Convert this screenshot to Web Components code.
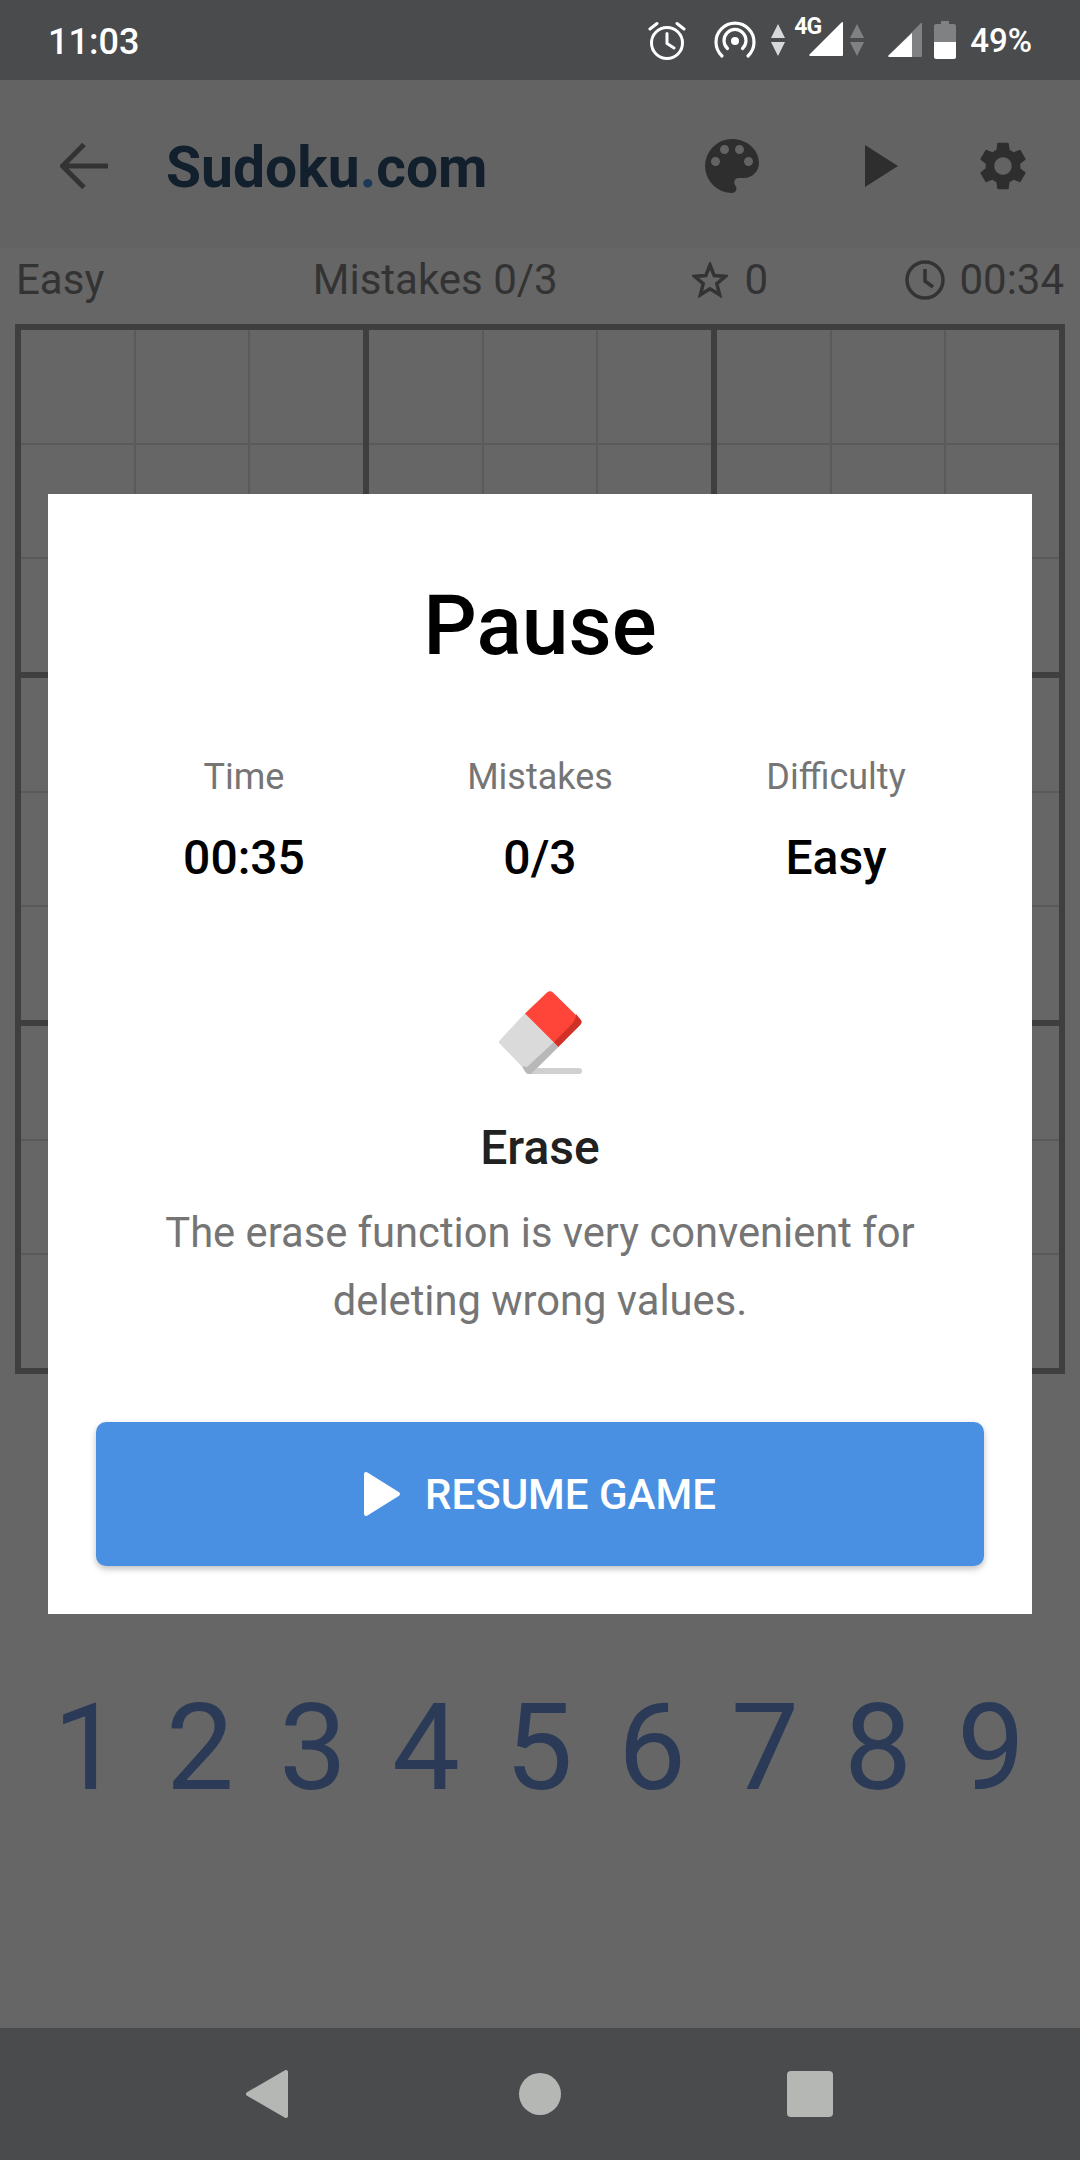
<!DOCTYPE html>
<html lang="en">
<head>
<meta charset="utf-8">
<title>Sudoku.com</title>
<style>
  html, body { margin: 0; padding: 0; }
  body { width: 1080px; height: 2160px; overflow: hidden; font-family: Roboto, "Liberation Sans", sans-serif; }
</style>
</head>
<body>
<sudoku-app>
  <status-bar slot="status"></status-bar>
  <game-header></game-header>
  <game-info></game-info>
  <sudoku-board></sudoku-board>
  <number-pad></number-pad>
  <pause-dialog slot="overlay">
    <pause-stat label="Time" value="00:35"></pause-stat>
    <pause-stat label="Mistakes" value="0/3"></pause-stat>
    <pause-stat label="Difficulty" value="Easy"></pause-stat>
  </pause-dialog>
  <nav-bar slot="nav"></nav-bar>
</sudoku-app>

<script>
  // small helper, every element just sets its shadow html in the constructor
  class Base extends HTMLElement {
    constructor(html) {
      super();
      this.attachShadow({ mode: 'open' });
      this.shadowRoot.innerHTML = html;
    }
  }

  class SudokuApp extends Base {
    constructor() {
      super(`
        <style>
          :host { display: flex; flex-direction: column; width: 1080px; height: 2160px; background: #fff; }
          #main { position: relative; flex: 1; display: flex; flex-direction: column; background: #fff; }
          #overlay { position: absolute; inset: 0; }
        </style>
        <slot name="status"></slot>
        <div id="main">
          <slot></slot>
          <div id="overlay"><slot name="overlay"></slot></div>
        </div>
        <slot name="nav"></slot>
      `);
    }
  }

  class StatusBar extends Base {
    constructor() {
      super(`
        <style>
          :host { display: flex; align-items: center; height: 80px; padding: 0 48px 0 48px; box-sizing: border-box; background: #4a4b4d; color: #fff; }
          #time { font-size: 36px; font-weight: 500; flex: 1; position: relative; top: 2px; }
          svg { display: block; flex: none; }
          #icons { display: flex; align-items: center; height: 80px; }
          #g4 { position: relative; width: 50px; height: 80px; margin-left: 12px; }
          #g4 span { position: absolute; left: -3px; top: 14px; font: 700 23px/26px Roboto, sans-serif; letter-spacing: -1px; }
          #g4 svg { position: absolute; left: 12px; top: 22px; }
          #pct { font-size: 33px; font-weight: 500; margin-left: 14px; }
        </style>
        <span id="time">11:03</span>
        <div id="icons">
          <svg width="38" height="40" viewBox="0 0 38 40"><g fill="none" stroke="#fff" stroke-width="3" stroke-linecap="round"><circle cx="19" cy="23" r="15.5"/><path d="M19 13.500V23.500L26 28M2 9L9 3.500M36 9L29 3.500"/></g></svg>
          <svg style="margin-left:28px" width="42" height="38" viewBox="0 0 42 38"><g fill="none" stroke="#fff" stroke-width="3.200" stroke-linecap="round"><path d="M8 35A19 19 0 1 1 34 35"/><path d="M13.500 27.500A11 11 0 1 1 28.500 27.500"/></g><circle cx="21" cy="20" r="4" fill="#fff"/></svg>
          <svg style="margin-left:15px" width="14" height="32" viewBox="0 0 14 32"><path d="M7 0L14 14H0Z M0 18H14L7 32Z" fill="#d8d8d8"/></svg>
          <div id="g4"><span>4G</span><svg width="34" height="34" viewBox="0 0 34 34"><path d="M33 0a1 1 0 0 1 1 1V33a1 1 0 0 1-1 1H1L0 33Z" fill="#fff"/></svg></div>
          <svg style="margin-left:3px" width="14" height="32" viewBox="0 0 14 32"><path d="M7 0L14 14H0Z M0 18H14L7 32Z" fill="#808183"/></svg>
          <svg style="margin-left:24px" width="34" height="34" viewBox="0 0 34 34"><path d="M34 0V33a1 1 0 0 1-1 1H1L0 33L33 0Z" fill="#808183"/><path d="M24 10V34H1L0 33Z" fill="#fff"/></svg>
          <svg style="margin-left:12px" width="22" height="38" viewBox="0 0 22 38"><path d="M7 0H15V3H20a2 2 0 0 1 2 2V21H0V5a2 2 0 0 1 2-2H7Z" fill="#808183"/><path d="M0 21H22V36a2 2 0 0 1-2 2H2a2 2 0 0 1-2-2Z" fill="#fff"/></svg>
          <span id="pct">49%</span>
        </div>
      `);
    }
  }

  class GameHeader extends Base {
    constructor() {
      super(`
        <style>
          :host { display: flex; align-items: center; height: 168px; padding-top: 3px; background: #f8f8f8; box-sizing: border-box; position: relative; }
          svg { display: block; flex: none; }
          h1 { margin: 3px 0 0 58px; font-size: 57px; font-weight: 700; color: #2f4e71; flex: 1; }
          h1 b { color: #4a90e2; font-weight: 700; }
        </style>
        <svg style="margin-left:60px" width="48" height="46" viewBox="0 0 48 46"><path d="M48 23H4M24 1.500L2.500 23L24 44.500" fill="none" stroke="#808080" stroke-width="5"/></svg>
        <h1>Sudoku<b>.</b>com</h1>
        <svg style="margin-right:97px" width="72" height="72" viewBox="0 0 24 24"><path fill="#737373" d="M12 3a9 9 0 0 0 0 18c.83 0 1.500-.67 1.500-1.500 0-.39-.15-.74-.39-1.010-.23-.26-.38-.61-.38-.99 0-.83.67-1.500 1.500-1.500H16c2.760 0 5-2.240 5-5 0-4.420-4.030-8-9-8zm-5.500 9c-.83 0-1.500-.67-1.500-1.500S5.670 9 6.500 9 8 9.670 8 10.500 7.330 12 6.500 12zm3-4C8.670 8 8 7.330 8 6.500S8.670 5 9.500 5s1.500.67 1.500 1.500S10.330 8 9.500 8zm5 0c-.83 0-1.500-.67-1.500-1.500S13.670 5 14.500 5s1.500.67 1.500 1.500S15.330 8 14.500 8zm3 4c-.83 0-1.500-.67-1.500-1.500S16.670 9 17.500 9s1.500.67 1.500 1.500-.67 1.500-1.500 1.500z"/></svg>
        <svg style="margin-right:76px" width="33" height="42" viewBox="0 0 33 42"><path fill="#737373" d="M0 0L33 21L0 42Z"/></svg>
        <svg style="margin-right:48px" width="58" height="58" viewBox="0 0 24 24"><path fill="#737373" d="M19.140 12.940c.04-.3.06-.61.06-.94 0-.32-.02-.64-.07-.94l2.030-1.580c.18-.14.23-.41.12-.61l-1.920-3.320c-.12-.22-.37-.29-.59-.22l-2.390.96c-.5-.38-1.030-.7-1.620-.94l-.36-2.540c-.04-.24-.24-.41-.48-.41h-3.840c-.24 0-.43.17-.47.41l-.36 2.540c-.59.24-1.130.57-1.620.94l-2.390-.96c-.22-.08-.47 0-.59.22L2.740 8.870c-.12.21-.08.47.12.61l2.030 1.580c-.05.3-.09.63-.09.94s.02.64.07.94l-2.030 1.580c-.18.14-.23.41-.12.61l1.920 3.320c.12.22.37.29.59.22l2.390-.96c.5.38 1.030.7 1.620.94l.36 2.540c.05.24.24.41.48.41h3.840c.24 0 .44-.17.47-.41l.36-2.540c.59-.24 1.130-.56 1.620-.94l2.390.96c.22.08.47 0 .59-.22l1.920-3.320c.12-.22.07-.47-.12-.61l-2.010-1.580zM12 15.600c-1.980 0-3.600-1.620-3.600-3.600s1.620-3.600 3.600-3.600 3.600 1.620 3.600 3.600-1.620 3.600-3.600 3.600z"/></svg>
      `);
    }
  }

  class GameInfo extends Base {
    constructor() {
      super(`
        <style>
          :host { display: flex; align-items: center; height: 76px; padding: 0 16px 13px; box-sizing: border-box; font-size: 42px; color: #808080; }
          svg { display: block; flex: none; }
          span { white-space: nowrap; }
        </style>
        <span style="width:297px">Easy</span>
        <span style="width:379px">Mistakes 0/3</span>
        <svg width="36" height="36" viewBox="0 0 36 36"><path d="M18 3L22.200 13.600L33.500 14.400L24.800 21.700L27.600 32.800L18 26.700L8.400 32.800L11.200 21.700L2.500 14.400L13.800 13.600Z" fill="none" stroke="#808080" stroke-width="3.500" stroke-linejoin="miter"/></svg>
        <span style="margin-left:17px;width:161px">0</span>
        <svg width="40" height="40" viewBox="0 0 40 40"><g fill="none" stroke="#808080" stroke-width="3.500"><circle cx="20" cy="20" r="18"/><path d="M20 9V21L28 27"/></g></svg>
        <span style="margin-left:14px">00:34</span>
      `);
    }
  }

  class SudokuBoard extends Base {
    constructor() {
      super(`
        <style>
          :host { display: block; margin: 0 15px; }
          #grid { display: grid; grid-template-columns: repeat(3, 342px); gap: 6px; width: 1050px; box-sizing: border-box; padding: 6px; background: #9e9e9e; }
          .box { display: grid; grid-template-columns: repeat(3, 1fr); grid-template-rows: repeat(3, 1fr); gap: 2px; height: 342px; background: #e2e2e2; }
          .cell { background: #fff; }
        </style>
        <div id="grid"></div>
      `);
      const grid = this.shadowRoot.getElementById('grid');
      for (let b = 0; b < 9; b++) {
        const box = document.createElement('div');
        box.className = 'box';
        for (let c = 0; c < 9; c++) {
          const cell = document.createElement('div');
          cell.className = 'cell';
          box.appendChild(cell);
        }
        grid.appendChild(box);
      }
    }
  }

  class NumberPad extends Base {
    constructor() {
      super(`
        <style>
          :host { display: grid; grid-template-columns: repeat(9, 113px); justify-content: center; padding: 303px 2px 0 0; font-size: 121px; line-height: 142px; color: #6c94d9; text-align: center; }
        </style>
        <span>1</span><span>2</span><span>3</span><span>4</span><span>5</span><span>6</span><span>7</span><span>8</span><span>9</span>
      `);
    }
  }

  class PauseStat extends Base {
    constructor() {
      super(`
        <style>
          :host { display: flex; flex-direction: column; align-items: center; width: 296px; }
          #l { font-size: 36px; line-height: 42px; color: #757575; }
          #v { font-size: 48px; line-height: 54px; font-weight: 500; color: #000; margin-top: 33px; }
        </style>
        <span id="l"></span>
        <span id="v"></span>
      `);
    }
    connectedCallback() {
      this.shadowRoot.getElementById('l').textContent = this.getAttribute('label');
      this.shadowRoot.getElementById('v').textContent = this.getAttribute('value');
    }
  }

  class PauseDialog extends Base {
    constructor() {
      super(`
        <style>
          :host { display: flex; align-items: center; justify-content: center; height: 100%; background: rgba(0, 0, 0, .6); }
          #card { width: 984px; height: 1120px; box-sizing: border-box; padding: 0 48px; background: #fff; display: flex; flex-direction: column; align-items: center; }
          h2 { margin: 83px 0 0; font-size: 84px; line-height: 98px; font-weight: 500; color: #000; }
          #stats { display: flex; justify-content: center; margin-top: 81px; }
          svg { display: block; flex: none; }
          #eraser { margin-top: 105px; }
          h3 { margin: 48px 0 0; font-size: 48px; line-height: 52px; font-weight: 500; color: #212121; }
          p { margin: 25px 0 0; font-size: 41.7px; line-height: 68px; color: #757575; text-align: center; width: 800px; }
          resume-button { margin-top: 87px; }
        </style>
        <div id="card">
          <h2>Pause</h2>
          <div id="stats"><slot></slot></div>
          <svg id="eraser" width="84" height="84" viewBox="0 0 84 84">
            <rect x="29" y="78" width="55" height="6" rx="3" fill="#d0d0d0"/>
            <path d="M28 25L59 56L32 82L3 52Z" fill="#dadada" stroke="#dadada" stroke-width="4" stroke-linejoin="round"/>
            <path d="M56 52L60 57L33 84L30 84Q27 83 24 76L29 77Z" fill="#b8b8b8"/>
            <path d="M27 23.500L49 2.500Q52 0 55 2.500L82 29Q85 32 82 35L60.300 56.700Z" fill="#ff4539"/>
            <path d="M78 24L82 29Q85 32 82 35L60.300 56.700L56 52L74 34Q78 30 78 24Z" fill="#d13026"/>
          </svg>
          <h3>Erase</h3>
          <p>The erase function is very convenient for deleting wrong values.</p>
          <resume-button></resume-button>
        </div>
      `);
    }
  }

  class ResumeButton extends Base {
    constructor() {
      super(`
        <style>
          :host { display: flex; align-items: center; justify-content: center; gap: 24px; width: 888px; height: 144px; border-radius: 10px; background: #4a90e2; color: #fff; font-size: 42px; font-weight: 500; box-shadow: 0 3px 6px rgba(0, 0, 0, .25); }
          svg { display: block; flex: none; }
        </style>
        <svg width="37" height="46" viewBox="0 0 37 46"><path d="M2 3L34 23L2 43Z" fill="#fff" stroke="#fff" stroke-width="4" stroke-linejoin="round"/></svg>
        <span>RESUME GAME</span>
      `);
    }
  }

  class NavBar extends Base {
    constructor() {
      super(`
        <style>
          :host { display: block; position: relative; height: 132px; background: #4a4b4d; }
          #row { display: flex; align-items: center; height: 132px; padding-left: 245px; }
          svg { display: block; flex: none; }
        </style>
        <div id="row">
          <svg width="44" height="50" viewBox="0 0 44 50"><path d="M3 25L41 3V47Z" fill="#b5b7b5" stroke="#b5b7b5" stroke-width="4" stroke-linejoin="round"/></svg>
          <svg style="margin-left:230px" width="42" height="42" viewBox="0 0 42 42"><circle cx="21" cy="21" r="21" fill="#b5b7b5"/></svg>
          <svg style="margin-left:226px" width="46" height="46" viewBox="0 0 46 46"><rect width="46" height="46" rx="4" fill="#b5b7b5"/></svg>
        </div>
      `);
    }
  }

  customElements.define('sudoku-app', SudokuApp);
  customElements.define('status-bar', StatusBar);
  customElements.define('game-header', GameHeader);
  customElements.define('game-info', GameInfo);
  customElements.define('sudoku-board', SudokuBoard);
  customElements.define('number-pad', NumberPad);
  customElements.define('pause-stat', PauseStat);
  customElements.define('pause-dialog', PauseDialog);
  customElements.define('resume-button', ResumeButton);
  customElements.define('nav-bar', NavBar);
</script>
</body>
</html>
